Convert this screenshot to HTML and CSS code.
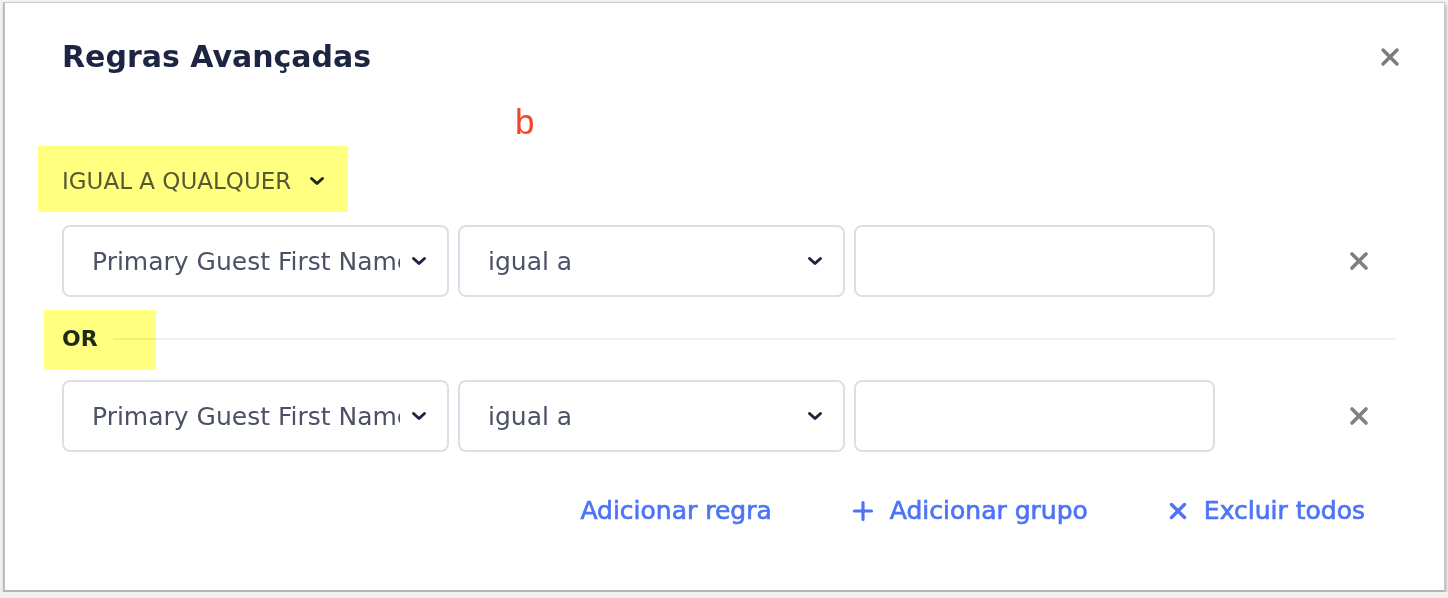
FILE: index.html
```html
<!DOCTYPE html>
<html lang="pt">

<head>
  <meta charset="UTF-8" />
  <meta name="viewport" content="width=device-width, initial-scale=1.0" />
  <title>Regras Avançadas</title>
  <link rel="stylesheet" href="styles.css">
</head>

<body>
  <div class="modal">
    <header class="modal-head">
      <h2>Regras Avançadas</h2>
      <button class="close" type="button" aria-label="Fechar">
        <svg width="20" height="20" viewBox="0 0 20 20"><path d="M3 3L17 17M17 3L3 17" stroke="currentColor" stroke-width="3.4" stroke-linecap="round"/></svg>
      </button>
    </header>

    <div class="note">b</div>

    <div class="group">
      <div class="combinator">
        <span class="hl hl-comb"></span>
        <span>IGUAL A QUALQUER</span>
        <svg class="chev" width="16" height="10" viewBox="0 0 16 10"><path d="M2.5 2.5l5.5 5 5.5-5" fill="none" stroke="currentColor" stroke-width="3" stroke-linecap="round" stroke-linejoin="round"/></svg>
      </div>

      <div class="rule">
        <div class="select field">
          <span class="value">Primary Guest First Name</span>
          <svg class="chev" width="16" height="10" viewBox="0 0 16 10"><path d="M2.5 2.5l5.5 5 5.5-5" fill="none" stroke="currentColor" stroke-width="3" stroke-linecap="round" stroke-linejoin="round"/></svg>
        </div>
        <div class="select op">
          <span class="value">igual a</span>
          <svg class="chev" width="16" height="10" viewBox="0 0 16 10"><path d="M2.5 2.5l5.5 5 5.5-5" fill="none" stroke="currentColor" stroke-width="3" stroke-linecap="round" stroke-linejoin="round"/></svg>
        </div>
        <input class="text-input" type="text" value="" />
        <button class="remove" type="button" aria-label="Remover">
          <svg width="22" height="22" viewBox="0 0 22 22"><path d="M4 4L18 18M18 4L4 18" stroke="currentColor" stroke-width="3.6" stroke-linecap="round"/></svg>
        </button>
      </div>

      <div class="sep">
        <span class="hl hl-or"></span>
        <span class="sep-label">OR</span>
        <span class="sep-line"></span>
      </div>

      <div class="rule">
        <div class="select field">
          <span class="value">Primary Guest First Name</span>
          <svg class="chev" width="16" height="10" viewBox="0 0 16 10"><path d="M2.5 2.5l5.5 5 5.5-5" fill="none" stroke="currentColor" stroke-width="3" stroke-linecap="round" stroke-linejoin="round"/></svg>
        </div>
        <div class="select op">
          <span class="value">igual a</span>
          <svg class="chev" width="16" height="10" viewBox="0 0 16 10"><path d="M2.5 2.5l5.5 5 5.5-5" fill="none" stroke="currentColor" stroke-width="3" stroke-linecap="round" stroke-linejoin="round"/></svg>
        </div>
        <input class="text-input" type="text" value="" />
        <button class="remove" type="button" aria-label="Remover">
          <svg width="22" height="22" viewBox="0 0 22 22"><path d="M4 4L18 18M18 4L4 18" stroke="currentColor" stroke-width="3.6" stroke-linecap="round"/></svg>
        </button>
      </div>
    </div>

    <div class="actions">
      <a class="action" href="#">Adicionar regra</a>
      <a class="action" href="#">
        <svg width="22" height="22" viewBox="0 0 22 22"><path d="M11 2.5V19.5M2.5 11H19.5" stroke="currentColor" stroke-width="3.2" stroke-linecap="round"/></svg>
        Adicionar grupo
      </a>
      <a class="action" href="#">
        <svg width="20" height="20" viewBox="0 0 20 20"><path d="M3.5 3.5L16.5 16.5M16.5 3.5L3.5 16.5" stroke="currentColor" stroke-width="3.4" stroke-linecap="round"/></svg>
        Excluir todos
      </a>
    </div>
  </div>
</body>

</html>
```

FILE: styles.css
```css
* {
  box-sizing: border-box;
}

body {
  margin: 0;
  background: #f1f1f1;
  font-family: "DejaVu Sans", "Open Sans", sans-serif;
  color: #4b5266;
}

.modal {
  position: relative;
  margin: 2px 3px 0 3px;
  width: 1442px;
  height: 590px;
  background: #fff;
  border: 1px solid #c9c9c9;
  border-left: 2px solid #bdbdbd;
  border-bottom: 2px solid #b5b5b5;
  box-shadow: 1px 3px 3px rgba(0, 0, 0, 0.3);
  padding: 0 48px 0 57px;
}

.modal-head {
  display: flex;
  align-items: center;
  justify-content: space-between;
  height: 107px;
}

.modal-head h2 {
  margin: 0;
  font-size: 30px;
  font-weight: 700;
  color: #1c2541;
}

.close {
  border: none;
  background: none;
  padding: 0;
  margin-right: -4px;
  color: #7b7b7b;
  display: flex;
}

.note {
  position: absolute;
  left: 510px;
  top: 99px;
  font-family: "Liberation Sans", sans-serif;
  font-size: 35px;
  color: #f2452c;
}

.group {
  padding-top: 42px;
}

.combinator {
  position: relative;
  display: flex;
  align-items: center;
  gap: 18px;
  height: 58px;
  font-size: 23px;
  color: #555a66;
  margin-bottom: 15px;
}

.combinator .chev {
  color: #1c2541;
}

.hl {
  position: absolute;
  background: #ffff80;
  mix-blend-mode: multiply;
  z-index: 1;
}

.hl-comb {
  left: -24px;
  top: -6px;
  width: 310px;
  height: 66px;
}

.rule {
  display: flex;
  align-items: center;
  gap: 9px;
}

.select,
.text-input {
  height: 72px;
  border: 2px solid #dedfe6;
  border-radius: 8px;
  background: #fff;
}

.select {
  display: flex;
  align-items: center;
  justify-content: space-between;
  padding: 0 20px 0 28px;
  font-size: 25px;
  color: #4b5266;
}

.select .value {
  white-space: nowrap;
  overflow: hidden;
}

.select .chev {
  flex-shrink: 0;
  color: #1c2541;
}

.field {
  width: 387px;
}

.field .value {
  width: 308px;
}

.op {
  width: 387px;
}

.text-input {
  width: 361px;
}

.remove {
  border: none;
  background: none;
  padding: 0;
  margin-left: 124px;
  color: #808080;
  display: flex;
}

.sep {
  position: relative;
  display: flex;
  align-items: center;
  gap: 15px;
  height: 83px;
}

.sep-label {
  font-size: 22px;
  font-weight: 700;
  color: #1f2a2a;
}

.sep-line {
  flex: 1;
  height: 2px;
  background: #f0f0f2;
}

.hl-or {
  left: -18px;
  top: 13px;
  width: 112px;
  height: 60px;
}

.actions {
  display: flex;
  justify-content: flex-end;
  align-items: center;
  gap: 80px;
  padding: 44px 31px 0 0;
}

.action {
  display: flex;
  align-items: center;
  gap: 16px;
  line-height: 30px;
  font-size: 25px;
  -webkit-text-stroke: 0.7px currentColor;
  color: #4d74f6;
  text-decoration: none;
}
```
